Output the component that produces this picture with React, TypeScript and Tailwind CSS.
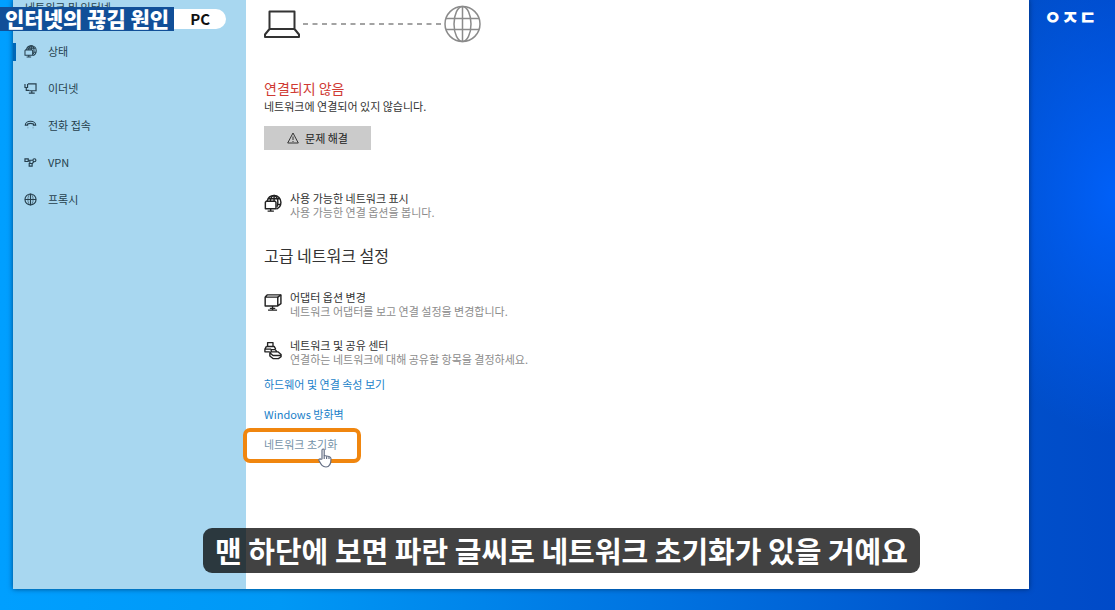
import React from "react";

const StatusIcon = ({ size }: { size: number }) => (
  <svg width={size} height={size} viewBox="0 0 20 20" fill="none" stroke="currentColor" strokeWidth="1.6" strokeLinejoin="round" aria-hidden="true">
    <path d="M3.500 7.500C4.400 3.800 7.400 1.200 11.200 1.200c4.400 0 7.600 3.300 7.600 7.500 0 3.400-2 6.200-4.800 7.400" />
    <path d="M7 7.500c.5-3.500 2-6.300 4.200-6.300s4.200 3.200 4.200 7.500c0 2-.4 3.700-1.100 5M5 4.800h12.300M14.300 11.200h4.200M11.200 1.200v6.300" />
    <path d="M1.500 8.500l1-1h9.800l1 1v7.300H1.500zM7.400 15.800v2.700M4 18.500h7" />
  </svg>
);

const EthernetIcon = () => (
  <svg width="13" height="13" viewBox="0 0 20 20" fill="none" stroke="currentColor" strokeWidth="1.8" aria-hidden="true">
    <path d="M6 3h12.500v10.500H8M12 13.500V17M7.500 17h9" />
    <path d="M1.500 3v5.500h4V3M3.500 8.500v4.500h4.500" />
  </svg>
);

const DialIcon = () => (
  <svg width="13" height="13" viewBox="0 0 20 20" fill="none" stroke="currentColor" strokeWidth="1.8" aria-hidden="true">
    <path d="M2 9.500C2 6 5.500 3.500 10 3.500S18 6 18 9.500h-3.500V7.800C12 6.500 8 6.500 5.500 7.800v1.700z" />
    <path d="M6 12v2.500M14 12v2.500" strokeWidth="1" opacity=".5" />
  </svg>
);

const VpnIcon = () => (
  <svg width="13" height="13" viewBox="0 0 20 20" fill="none" stroke="currentColor" strokeWidth="1.8" aria-hidden="true">
    <path d="M1.500 4.500h5v4h-5zM6.500 6.500h7M9 6.500v5M8 11.500h4.500v4H8zM12.500 12l3-4" />
    <circle cx="16" cy="6.500" r="2.300" />
  </svg>
);

const ProxyIcon = () => (
  <svg width="13" height="13" viewBox="0 0 20 20" fill="none" stroke="currentColor" strokeWidth="1.8" aria-hidden="true">
    <circle cx="10" cy="10" r="8.500" />
    <ellipse cx="10" cy="10" rx="4" ry="8.500" strokeWidth="1" />
    <path d="M10 1.500v17M1.500 10h17" />
  </svg>
);

const AdapterIcon = () => (
  <svg width="19" height="19" viewBox="0 0 20 20" fill="none" stroke="currentColor" strokeWidth="1.6" strokeLinejoin="round" aria-hidden="true">
    <path d="M1.300 4h14v9.800h-14zM1.300 4l2.500-2.500h15v9.800l-3.500 2.500" />
    <path d="M15.300 4l3.500-2.500M9.500 14v4.300M4.500 18.500h10M6.500 16.500h6" />
  </svg>
);

const SharingIcon = () => (
  <svg width="19" height="19" viewBox="0 0 20 20" fill="none" stroke="currentColor" strokeWidth="1.5" strokeLinejoin="round" aria-hidden="true">
    <path d="M4 5.500V1.200h6v4.300M2.700 5.500h8.600l1.700 3M2.700 5.500L1 8.500v3h5.500M1 8.500h7" />
    <path d="M8 12V9h4.500l2 2.500M6.500 12.500L8 11.500h7.500l3.500 3v2.500l-3 2H10l-3.500-3zM6.500 12.500l3.500 3h9" />
  </svg>
);

const LaptopIcon = () => (
  <svg width="36" height="28" viewBox="0 0 36 28" fill="none" stroke="#333" strokeWidth="2" strokeLinejoin="round" aria-hidden="true">
    <path d="M5.500 1.500h25v17.500h-25zM5.500 19L1 24.500V27h34v-2.500L30.500 19" />
  </svg>
);

const GlobeIcon = () => (
  <svg width="37" height="38" viewBox="0 0 37 38" fill="none" stroke="#8b8b8b" strokeWidth="1.500" aria-hidden="true">
    <circle cx="18.500" cy="19" r="17.500" />
    <ellipse cx="18.500" cy="19" rx="8.500" ry="17.500" />
    <path d="M18.500 1.500v35M2 13.500h33M2 24.500h33" />
  </svg>
);

const WarningIcon = () => (
  <svg width="12" height="12" viewBox="0 0 12 12" fill="none" stroke="#333" aria-hidden="true">
    <path d="M6 1L11.300 11H.7zM6 4.500v3.500M6 9v1" />
  </svg>
);

const HandCursor = () => (
  <svg className="absolute left-[54px] top-[12px]" width="14" height="20" viewBox="0 0 14 20" fill="#fff" stroke="#667085" strokeWidth="1.200" strokeLinejoin="round" aria-hidden="true">
    <path d="M4 11V2.200C4 .6 6.200.6 6.200 2.200v5.300l4.800 1c1.400.3 2 1 2 2.300 0 4.700-.8 8.200-5 8.200-3.500 0-4.800-2-7-6.500-.6-1.300 1.200-2.300 2-1.200z" />
    <path d="M6.200 7.500V11M8.600 8.200V11M11 8.700V11" />
  </svg>
);

const navItems = [
  { icon: <StatusIcon size={13} />, label: "상태", active: true },
  { icon: <EthernetIcon />, label: "이더넷" },
  { icon: <DialIcon />, label: "전화 접속" },
  { icon: <VpnIcon />, label: "VPN" },
  { icon: <ProxyIcon />, label: "프록시" },
];

const SettingRow = ({
  icon,
  title,
  description,
}: {
  icon: React.ReactNode;
  title: string;
  description: string;
}) => (
  <button className="flex items-start gap-2 text-left text-[11px] leading-[14px]">
    <span className="flex w-[18px] shrink-0 justify-center pt-[3px] text-[#222]">{icon}</span>
    <span>
      <span className="block text-[#333]">{title}</span>
      <span className="block text-[#8c8c8c]">{description}</span>
    </span>
  </button>
);

const Sidebar = () => (
  <nav className="w-[233px] shrink-0 bg-[#a8d7f0] text-[11px] text-[#263f4d]">
    <h1 className="h-[33px] pl-3 leading-[14px]">네트워크 및 인터넷</h1>
    <ul>
      {navItems.map((item) => (
        <li key={item.label}>
          <a href="#" className="flex h-[37px] items-center">
            <span className={item.active ? "h-[18px] w-[3px] bg-[#0067b8]" : "h-[18px] w-[3px]"} />
            <span className="ml-2">{item.icon}</span>
            <span className="ml-[11px]">{item.label}</span>
          </a>
        </li>
      ))}
    </ul>
  </nav>
);

const Content = () => (
  <main className="flex flex-1 flex-col items-start bg-white px-[18px] pt-[5px]">
    <div className="flex items-center">
      <LaptopIcon />
      <svg className="mx-[3px]" width="138" height="2" aria-hidden="true">
        <path d="M0 1h138" stroke="#a3a3a3" strokeWidth="2" strokeDasharray="5 4.500" />
      </svg>
      <GlobeIcon />
    </div>

    <h2 className="mt-[35px] text-[14px] leading-5 text-[#cf3a33]">연결되지 않음</h2>
    <p className="text-[11px] leading-4 text-[#333]">네트워크에 연결되어 있지 않습니다.</p>
    <button className="mt-3 flex h-6 w-[107px] items-center justify-center gap-[6px] bg-[#cbcbcb] text-[11px] text-[#222]">
      <WarningIcon />
      문제 해결
    </button>

    <div className="mt-[41px]">
      <SettingRow icon={<StatusIcon size={19} />} title="사용 가능한 네트워크 표시" description="사용 가능한 연결 옵션을 봅니다." />
    </div>

    <h2 className="mt-6 text-[16px] leading-6 text-[#333]">고급 네트워크 설정</h2>
    <div className="mt-[23px] flex flex-col gap-5">
      <SettingRow icon={<AdapterIcon />} title="어댑터 옵션 변경" description="네트워크 어댑터를 보고 연결 설정을 변경합니다." />
      <SettingRow icon={<SharingIcon />} title="네트워크 및 공유 센터" description="연결하는 네트워크에 대해 공유할 항목을 결정하세요." />
    </div>

    <div className="mt-[10px] flex flex-col items-start gap-[14px] text-[11px] leading-4 text-[#1a7fc9]">
      <a href="#">하드웨어 및 연결 속성 보기</a>
      <a href="#">Windows 방화벽</a>
      <div className="relative">
        <a href="#" className="text-[#7592a8]">네트워크 초기화</a>
        <span className="absolute -left-[21px] -top-2 h-[35px] w-[118px] rounded-[7px] border-4 border-[#f0860f]" />
        <HandCursor />
      </div>
    </div>
  </main>
);

export default function App() {
  return (
    <div className="relative flex h-screen overflow-hidden bg-[radial-gradient(ellipse_160px_240px_at_100%_32%,#0060f8,transparent),linear-gradient(90deg,#009fff_0%,#0098f5_25%,#0072e0_60%,#0050ca_90%,#004ac8_100%)] pb-[21px] pl-[13px] font-['Noto_Sans_CJK_KR',sans-serif]">
      <div className="flex flex-1 shadow-[0_0_5px_rgba(0,30,70,0.7)]">
        <Sidebar />
        <Content />
      </div>
      <aside className="w-[86px] shrink-0 pl-[15px] pt-[3px] text-[19px] font-black leading-7 text-white">
        ㅇㅈㄷ
      </aside>

      <div className="absolute left-0 top-[7px] flex h-6 items-center">
        <strong className="h-6 bg-[#114f98] px-[5px] text-[21px] font-black leading-[22px] text-white">
          인터넷의 끊김 원인
        </strong>
        <span className="flex h-5 w-[52px] items-center justify-center rounded-r-full bg-white text-[15px] font-bold text-[#111]">
          PC
        </span>
      </div>

      <div className="absolute inset-x-0 bottom-[37px] flex justify-center pl-2">
        <p className="rounded-[9px] bg-black/74 px-3 text-[29px] font-bold leading-[45px] text-white">
          맨 하단에 보면 파란 글씨로 네트워크 초기화가 있을 거예요
        </p>
      </div>
    </div>
  );
}
